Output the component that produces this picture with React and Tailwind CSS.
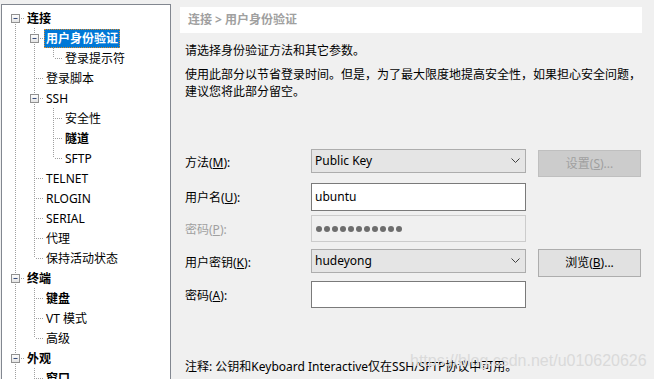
import React from "react";

const tree = [
  { t: "连接", bold: true, box: true, cells: ["first"] },
  { t: "用户身份验证", bold: true, box: true, sel: true, cells: ["v", "tee"] },
  { t: "登录提示符", cells: ["v", "v", "elbow"] },
  { t: "登录脚本", cells: ["v", "tee"] },
  { t: "SSH", box: true, cells: ["v", "tee"] },
  { t: "安全性", cells: ["v", "v", "tee"] },
  { t: "隧道", bold: true, cells: ["v", "v", "tee"] },
  { t: "SFTP", cells: ["v", "v", "elbow"] },
  { t: "TELNET", cells: ["v", "tee"] },
  { t: "RLOGIN", cells: ["v", "tee"] },
  { t: "SERIAL", cells: ["v", "tee"] },
  { t: "代理", cells: ["v", "tee"] },
  { t: "保持活动状态", cells: ["v", "elbow"] },
  { t: "终端", bold: true, box: true, cells: ["tee"] },
  { t: "键盘", bold: true, cells: ["v", "tee"] },
  { t: "VT 模式", cells: ["v", "tee"] },
  { t: "高级", cells: ["v", "elbow"] },
  { t: "外观", bold: true, box: true, cells: ["tee"] },
  { t: "窗口", bold: true, cells: ["v", "tee"] },
];

function Cell({ kind, box }) {
  const dot = { stroke: "#a0a0a0", strokeWidth: 1, strokeDasharray: "1 1" };
  return (
    <svg width="19" height="20" className="shrink-0 block">
      {kind === "v" && <line x1="9.5" y1="0" x2="9.5" y2="20" {...dot} />}
      {kind === "tee" && <line x1="9.5" y1="0" x2="9.5" y2="20" {...dot} />}
      {kind === "elbow" && <line x1="9.5" y1="0" x2="9.5" y2="10" {...dot} />}
      {kind === "first" && <line x1="9.5" y1="10" x2="9.5" y2="20" {...dot} />}
      {kind !== "v" && <line x1="11" y1="10.5" x2="19" y2="10.5" {...dot} />}
      {box && (
        <g>
          <defs>
            <linearGradient id="bx" x1="0" y1="0" x2="0" y2="1">
              <stop offset="0" stopColor="#ffffff" />
              <stop offset="1" stopColor="#e3e3e3" />
            </linearGradient>
          </defs>
          <rect x="5.5" y="6.5" width="8" height="8" fill="url(#bx)" stroke="#919191" />
          <line x1="7.5" y1="10.5" x2="11.5" y2="10.5" stroke="#3b4f7c" />
        </g>
      )}
    </svg>
  );
}

function Chevron() {
  return (
    <svg width="9" height="6" className="shrink-0">
      <path d="M0.5 0.5 L4.5 4.5 L8.5 0.5" fill="none" stroke="#404040" strokeWidth="1" />
    </svg>
  );
}

export default function App() {
  const font = "font-['Noto_Sans','Noto_Sans_CJK_SC',sans-serif]";
  return (
    <div className={`relative w-[654px] h-[379px] overflow-hidden bg-[#f0f0f0] flex text-[12px] text-black ${font}`}>
      {/* Tree */}
      <div className="ml-[1px] mt-[4px] w-[170px] shrink-0 bg-white border-l border-t border-r border-[#828790] pt-[3px] pl-[4px]">
        {tree.map((r, i) => (
          <div key={i} className="flex items-center h-[20px]">
            {r.cells.map((c, j) => (
              <Cell key={j} kind={c} box={r.box && j === r.cells.length - 1} />
            ))}
            <span
              className={
                "h-[19px] px-[1px] leading-[17px] whitespace-nowrap border " +
                (r.sel
                  ? "bg-[#0078d7] text-white border-dotted border-[#d98a2b]"
                  : "border-transparent") +
                (r.bold ? " font-bold" : "")
              }
            >
              {r.t}
            </span>
          </div>
        ))}
      </div>

      {/* Right panel */}
      <div className="pl-[9px] pt-[7px]">
        <div className="w-[462px] h-[26px] bg-white pl-[8px] flex items-center font-bold text-[#a0a0a0]">
          连接 &gt; 用户身份验证
        </div>

        <div className="pl-[5px]">
          <p className="mt-[9px] leading-[17px]">请选择身份验证方法和其它参数。</p>
          <p className="mt-[7px] leading-[17px] whitespace-nowrap">
            使用此部分以节省登录时间。但是，为了最大限度地提高安全性，如果担心安全问题，
            <br />
            建议您将此部分留空。
          </p>

          {/* Form */}
          <div className="mt-[49px] flex flex-col">
            <div className="flex items-start h-[34px]">
              <span className="w-[126px] pt-[2px] leading-[24px]">
                方法(<u>M</u>):
              </span>
              <div className="w-[215px] h-[24px] bg-[#e5e5e5] border border-[#adadad] flex items-center justify-between pl-[3px] pr-[5px]">
                <span>Public Key</span>
                <Chevron />
              </div>
              <div className="ml-[12px] mt-[1px] w-[103px] h-[27px] bg-[#cccccc] border border-[#bfbfbf] text-[#a0a0a0] flex items-center justify-center">
                设置(<u>S</u>)...
              </div>
            </div>

            <div className="flex items-start h-[32px]">
              <span className="w-[126px] pt-[1px] leading-[28px]">
                用户名(<u>U</u>):
              </span>
              <div className="w-[215px] h-[28px] bg-white border border-[#7a7a7a] flex items-center pl-[3px]">
                ubuntu
              </div>
            </div>

            <div className="flex items-start h-[34px]">
              <span className="w-[126px] pt-[1px] leading-[27px] text-[#a0a0a0]">
                密码(<u>P</u>):
              </span>
              <div className="w-[215px] h-[27px] bg-[#f0f0f0] border border-[#cccccc] flex items-center pl-[4px] gap-[2px]">
                {Array.from({ length: 11 }).map((_, i) => (
                  <span key={i} className="w-[6px] h-[6px] rounded-full bg-[#6d6d6d]" />
                ))}
              </div>
            </div>

            <div className="flex items-start h-[32px]">
              <span className="w-[126px] pt-[2px] leading-[24px]">
                用户密钥(<u>K</u>):
              </span>
              <div className="w-[215px] h-[24px] bg-[#e5e5e5] border border-[#adadad] flex items-center justify-between pl-[3px] pr-[5px]">
                <span>hudeyong</span>
                <Chevron />
              </div>
              <div className="ml-[12px] w-[103px] h-[28px] bg-[#e1e1e1] border border-[#adadad] flex items-center justify-center">
                浏览(<u>B</u>)...
              </div>
            </div>

            <div className="flex items-start h-[27px]">
              <span className="w-[126px] pt-[1px] leading-[27px]">
                密码(<u>A</u>):
              </span>
              <div className="w-[215px] h-[27px] bg-white border border-[#7a7a7a]" />
            </div>
          </div>

          <p className="mt-[50px] leading-[17px] whitespace-nowrap">
            注释: 公钥和Keyboard Interactive仅在SSH/SFTP协议中可用。
          </p>
        </div>
      </div>

      {/* watermark */}
      <div className="absolute left-[410px] top-[349px] text-[16px] font-['Liberation_Sans',sans-serif] text-[#dadada] pointer-events-none">
        https://blog.csdn.net/u010620626
      </div>
    </div>
  );
}
